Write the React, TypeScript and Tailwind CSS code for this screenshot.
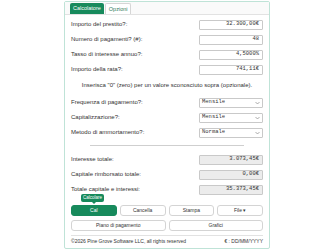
import React from "react";

const sans = { fontFamily: '"Liberation Sans", Arial, sans-serif' };

function Row({ label, children }: { label: string; children: React.ReactNode }) {
  return (
    <div className="flex h-[15px] items-center justify-between">
      <span className="text-[6px] text-[#333]">{label}</span>
      {children}
    </div>
  );
}

function Input({ value, gray }: { value: string; gray?: boolean }) {
  return (
    <div
      className={`flex h-[10px] w-[64px] items-center justify-end rounded-[1px] border border-[#c9c9c9] px-[3px] text-[5.5px] text-[#333] ${gray ? "bg-[#ececec]" : "bg-white"}`}
      style={{ fontFamily: '"Liberation Mono", monospace' }}
    >
      {value}
    </div>
  );
}

function Select({ value }: { value: string }) {
  return (
    <div
      className="flex h-[10px] w-[64px] items-center justify-between rounded-[1px] border border-[#c9c9c9] bg-white px-[2px] text-[5.5px] text-[#333]"
      style={{ fontFamily: '"Liberation Mono", monospace' }}
    >
      <span>{value}</span>
      <svg width="5" height="4" viewBox="0 0 5 4">
        <path d="M0.5 1 L2.5 3 L4.5 1" fill="none" stroke="#777" strokeWidth="0.6" />
      </svg>
    </div>
  );
}

function Btn({ children, green, className = "" }: { children: React.ReactNode; green?: boolean; className?: string }) {
  return (
    <div
      className={`flex h-[11px] items-center justify-center rounded-[3px] border text-[5px] ${green ? "border-[#178a5c] bg-[#178a5c] text-white" : "border-[#d4d4d4] bg-white text-[#333]"} ${className}`}
    >
      {children}
    </div>
  );
}

export default function App() {
  return (
    <div className="h-[251px] w-[334px] bg-white" style={sans}>
      <div className="mx-auto mt-[1px] w-[206px] rounded-[2px] border border-[#bfe3d7] bg-white">
        <div className="flex h-[13px] items-end gap-[1px] border-b border-[#e2e2e2] bg-[#fafafa] px-[5px]">
          <div className="flex h-[11px] items-center rounded-t-[2px] bg-[#178a5c] px-[3px] text-[5.5px] text-white">Calcolatore</div>
          <div className="flex h-[11px] items-center rounded-t-[2px] border border-b-0 border-[#d6d6d6] bg-white px-[3px] text-[5.5px] text-[#2f7a5c]">Opzioni</div>
        </div>
        <div className="px-[6px] pt-[2px]">
          <Row label="Importo del prestito?:"><Input value="32.300,00€" /></Row>
          <Row label="Numero di pagamenti? (#):"><Input value="48" /></Row>
          <Row label="Tasso di interesse annuo?:"><Input value="4,5000%" /></Row>
          <Row label="Importo della rata?:"><Input value="741,11€" /></Row>
          <div className="flex h-[16px] items-center justify-center text-[6px] text-[#333]">
            Inserisca "0" (zero) per un valore sconosciuto sopra (opzionale).
          </div>
          <div className="mt-[2px]">
            <Row label="Frequenza di pagamento?:"><Select value="Mensile" /></Row>
            <Row label="Capitalizzazione?:"><Select value="Mensile" /></Row>
            <Row label="Metodo di ammortamento?:"><Select value="Normale" /></Row>
          </div>
          <div className="mx-auto mt-[5px] mb-[6px] h-px w-[154px] bg-[#cfcfcf]" />
          <Row label="Interesse totale:"><Input value="3.073,45€" gray /></Row>
          <Row label="Capitale rimborsato totale:"><Input value="0,00€" gray /></Row>
          <Row label="Totale capitale e interessi:"><Input value="35.373,45€" gray /></Row>
          <div className="relative mt-[8px] grid grid-cols-4 gap-x-[3px] gap-y-[4px]">
            <div className="absolute left-[10px] top-[-11px] flex h-[8px] items-center rounded-[2px] bg-[#178a5c] px-[2px] text-[4.5px] text-white">
              Calcolare
              <div className="absolute bottom-[-2px] left-[11px] h-0 w-0 border-x-[2px] border-t-[2px] border-x-transparent border-t-[#178a5c]" />
            </div>
            <Btn green>Cal</Btn>
            <Btn>Cancella</Btn>
            <Btn>Stampa</Btn>
            <Btn>File ▾</Btn>
            <Btn className="col-span-2">Piano di pagamento</Btn>
            <Btn className="col-span-2">Grafici</Btn>
          </div>
          <div className="mt-[4px] flex h-[13px] items-center justify-between border-t border-[#e2e2e2] text-[5px] text-[#333]">
            <span>©2026 Pine Grove Software LLC, all rights reserved</span>
            <span>€ : DD/MM/YYYY</span>
          </div>
        </div>
      </div>
    </div>
  );
}
